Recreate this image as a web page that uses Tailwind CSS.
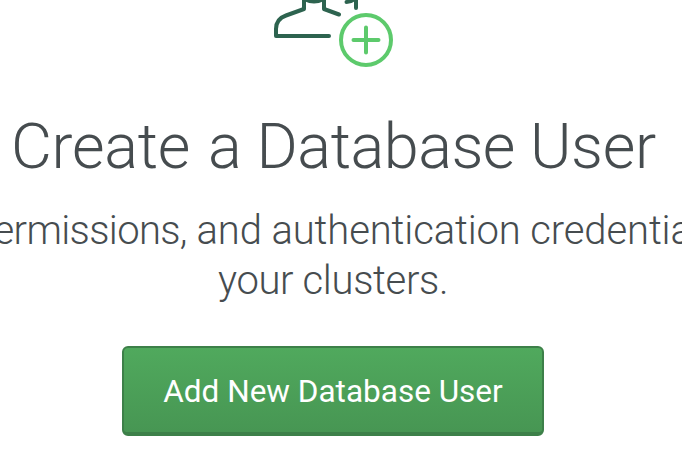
<!DOCTYPE html>
<html lang="en">
<head>
<meta charset="utf-8">
<title>Create a Database User</title>
<script src="https://cdn.jsdelivr.net/npm/@tailwindcss/browser@4"></script>
</head>
<body class="bg-white">
<main class="flex h-[470px] w-[682px] flex-col items-start overflow-hidden bg-white font-['Roboto','Liberation_Sans',sans-serif] font-light text-[#464c4f]">
  <svg class="ml-[260px] h-[75px] w-[150px] shrink-0" viewBox="0 0 150 75" fill="none" stroke-linecap="round" stroke-linejoin="round" stroke-width="4">
    <g stroke="#2d634f">
      <path d="M44 -6V9L26 15.500Q16 19 16 29V36H69"/>
      <path d="M64 -6V9L79 14.500M96 -6V8"/>
      <path d="M44 -1Q54 4 64 -1M86.500 2Q91 2 95 -1"/>
    </g>
    <g stroke="#5dca6c">
      <circle cx="106" cy="40" r="25"/>
      <path d="M106 27.500V52.500M93.500 40H118.500"/>
    </g>
  </svg>
  <h1 class="mt-[34px] ml-[11px] h-[76px] whitespace-nowrap text-[63px] leading-[76px] tracking-[-0.300px]"><span>Create</span> <span class="ml-[3px]">a</span> <span class="tracking-[-0.500px]">Database</span> <span>User</span></h1>
  <p class="mt-[21px] w-full text-[40px] leading-[50px]">
    <span class="-ml-[28px] block whitespace-nowrap tracking-[-0.130px]"><span class="tracking-[-0.650px]">permissions,</span> and authentication credentials</span>
    <span class="ml-[218px] block whitespace-nowrap tracking-[-0.350px]">your clusters.</span>
  </p>
  <button class="mt-[40px] ml-[122px] h-[90px] w-[422px] shrink-0 rounded-[6px] border-2 border-b-4 border-[#3d8049] bg-linear-to-b from-[#50a95d] to-[#479653] pt-[4px] text-[31.500px] leading-none font-normal whitespace-nowrap text-white">Add New Database User</button>
</main>
</body>
</html>
